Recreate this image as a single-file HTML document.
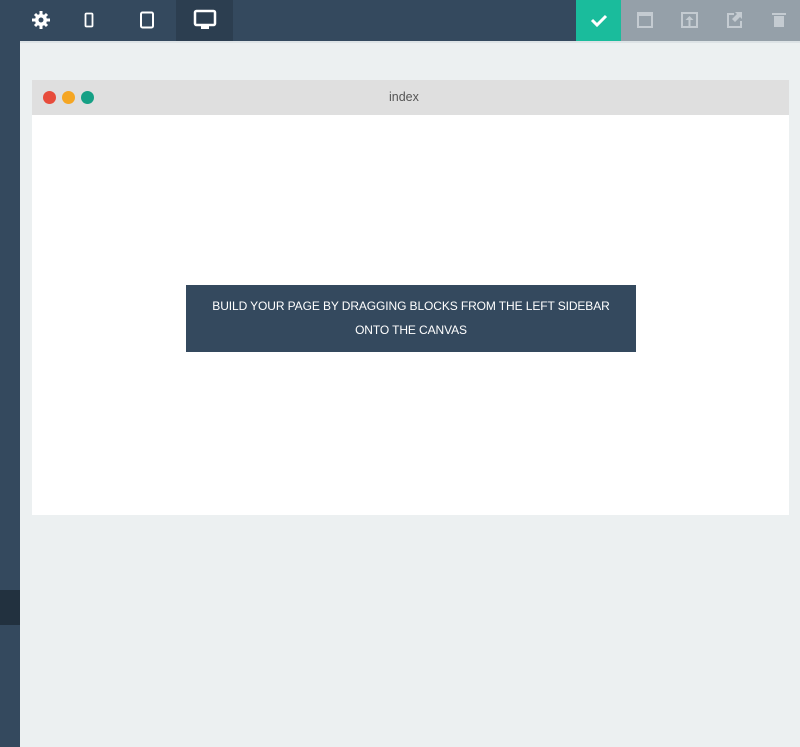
<!DOCTYPE html>
<html><head><style>
body{margin:0;width:800px;height:747px;overflow:hidden;background:#ecf0f1;font-family:"Liberation Sans",sans-serif;position:relative}
.side{position:absolute;left:0;top:0;width:20px;height:747px;background:#34495e}
.tab{position:absolute;left:0;top:590px;width:20px;height:35px;background:#22313f}
.top{position:absolute;left:20px;top:0;width:780px;height:41px;background:#34495e;border-bottom:2px solid #dde3e6}
.ic{position:absolute;top:0;height:41px;display:flex;align-items:center;justify-content:center}
.win{position:absolute;left:32px;top:80px;width:757px;height:435px;background:#fff}
.bar{height:35px;background:#dfdfdf;position:relative;line-height:35px;font-size:12.5px;color:#555}
.dot{position:absolute;top:11px;width:13px;height:13px;border-radius:50%}
.msg{position:absolute;left:154px;top:205px;width:450px;height:67px;background:#34495e;color:#fff;font-size:12px;text-align:center;line-height:24px;padding-top:9px;box-sizing:border-box;letter-spacing:-0.1px}
</style></head><body>
<div class="side"></div><div class="tab"></div>
<div class="top">
<div class="ic" style="left:156px;width:57px;background:#2c3e50"></div>
<div class="ic" style="left:556px;width:45px;background:#1abc9c"></div>
<div class="ic" style="left:601px;width:179px;background:#95a0a9"></div>
</div>
<svg style="position:absolute;left:0;top:0" width="800" height="41">
<g fill="#fff"><circle cx="41" cy="20" r="6"/><g stroke="#fff" stroke-width="3"><line x1="41" y1="11" x2="41" y2="29"/><line x1="32" y1="20" x2="50" y2="20"/><line x1="35" y1="14" x2="47" y2="26"/><line x1="47" y1="14" x2="35" y2="26"/></g><circle cx="41" cy="20" r="2.5" fill="#34495e"/></g>
<rect x="85.5" y="13.5" width="7" height="13" rx="1" fill="none" stroke="#fff" stroke-width="1.8"/>
<rect x="141" y="12.5" width="12" height="15" rx="1.5" fill="none" stroke="#fff" stroke-width="2"/>
<rect x="195" y="11" width="20" height="14" rx="1.5" fill="none" stroke="#fff" stroke-width="2.5"/><rect x="201" y="25" width="8" height="4" fill="#fff"/>
<path d="M592 20l5 5 9-9" fill="none" stroke="#fff" stroke-width="3"/>
<rect x="638" y="13" width="14" height="14" fill="none" stroke="#c4cbd1" stroke-width="2"/><rect x="638" y="13" width="14" height="3" fill="#c4cbd1"/>
<rect x="682" y="13" width="15" height="14" fill="none" stroke="#c4cbd1" stroke-width="2"/><path d="M689.5 16l-4 4h3v6h2v-6h3z" fill="#c4cbd1"/>
<path d="M734 14h-6v13h13v-6" fill="none" stroke="#c4cbd1" stroke-width="2"/><path d="M735 12h7v7l-2-2-5 5-3-3 5-5z" fill="#c4cbd1"/>
<rect x="772" y="13" width="14" height="2" fill="#c4cbd1"/><rect x="774" y="16" width="10" height="11" fill="#c4cbd1"/>
</svg>
<div class="win"><div class="bar"><span style="position:absolute;left:357px">index</span>
<span class="dot" style="left:11px;background:#e74c3c"></span><span class="dot" style="left:30px;background:#f5a623"></span><span class="dot" style="left:49px;background:#16a085"></span></div>
<div class="msg">BUILD YOUR PAGE BY DRAGGING BLOCKS FROM THE LEFT SIDEBAR<br>ONTO THE CANVAS</div></div>
</body></html>
